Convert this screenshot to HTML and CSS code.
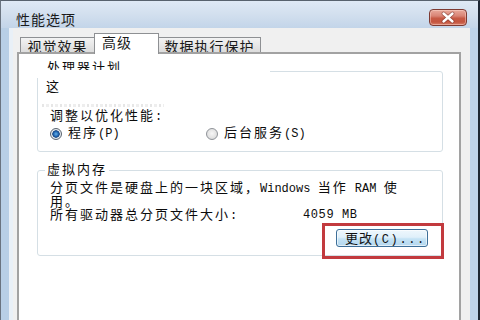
FILE: index.html
```html
<!DOCTYPE html>
<html lang="zh-CN">
<head>
<meta charset="utf-8">
<title>性能选项</title>
<link rel="stylesheet" href="styles.css">
</head>
<body>
<div class="window">
  <div class="titlebar">
    <span class="title">性能选项</span>
    <span class="close">
      <svg width="38" height="17" viewBox="0 0 38 17">
        <path d="M14.5 4.5 L23.5 12.5 M23.5 4.5 L14.5 12.5" stroke="#6b2a22" stroke-width="4" stroke-linecap="round" fill="none" opacity="0.55"/>
        <path d="M14.5 4.5 L23.5 12.5 M23.5 4.5 L14.5 12.5" stroke="#ffffff" stroke-width="2.4" stroke-linecap="round" fill="none"/>
      </svg>
    </span>
  </div>
  <div class="frame">
    <div class="client">
      <div class="tabs">
        <div class="tab tab-1">视觉效果</div>
        <div class="tab tab-active">高级</div>
        <div class="tab tab-3">数据执行保护</div>
      </div>
      <div class="panel">
        <fieldset class="group group-cpu">
          <legend class="legend legend-cut">处理器计划<span class="smear"></span></legend>
          <div class="body">
            <p class="line line-cut">这</p>
            <div class="ghost"></div>
            <p class="line line-sub">调整以优化性能<span class="lat">:</span></p>
            <div class="radios">
              <label class="radio radio-1"><span class="dot checked"></span>程序<span class="lat">(P)</span></label>
              <label class="radio"><span class="dot"></span>后台服务<span class="lat">(S)</span></label>
            </div>
          </div>
        </fieldset>
        <fieldset class="group group-vm">
          <legend class="legend">虚拟内存</legend>
          <div class="body">
            <p class="line line-two">分页文件是硬盘上的一块区域，<span class="lat">Windows </span>当作<span class="lat"> RAM </span>使<br>用。</p>
            <div class="size-row">
              <span class="size-label">所有驱动器总分页文件大小<span class="lat">:</span></span>
              <span class="lat size-value">4059 MB</span>
            </div>
            <div class="btn-row">
              <span class="btn-wrap">
                <button class="btn" type="button">更改<span class="lat btn-lat">(C)...</span></button>
                <span class="mark"></span>
              </span>
            </div>
          </div>
        </fieldset>
      </div>
    </div>
  </div>
</div>
</body>
</html>
```

FILE: styles.css
```css
* { box-sizing: border-box; }

html, body {
  margin: 0;
  padding: 0;
  width: 480px;
  height: 320px;
  overflow: hidden;
  background: #ffffff;
}

body {
  font-family: "Liberation Mono", "Noto Sans CJK SC", monospace;
  color: #0c0c0c;
}

.window {
  width: 480px;
  height: 320px;
  display: flex;
  flex-direction: column;
  border-top: 1px solid #58626e;
  border-left: 1px solid #6a7480;
  border-right: 2px solid #1c2633;
  background: #bcd2e8;
  overflow: hidden;
}

.titlebar {
  height: 27px;
  flex: none;
  display: flex;
  align-items: flex-start;
  justify-content: space-between;
  padding: 8px 11px 0 15px;
  background: linear-gradient(to bottom, #dfe9f5 0%, #d2dfee 50%, #c3d5e9 100%);
}

.title {
  font-family: "Noto Sans CJK SC", sans-serif;
  font-size: 14px;
  line-height: 14px;
  letter-spacing: 1px;
  margin-top: 3px;
  color: #1a1a1a;
}

.close {
  width: 38px;
  height: 17px;
  display: block;
  border: 1px solid #7d3a32;
  border-radius: 4px;
  background: linear-gradient(to bottom, #e9a99b 0%, #d98475 40%, #c75a45 55%, #c4553f 80%, #d9806a 100%);
  box-shadow: inset 0 0 0 1px rgba(255, 220, 210, 0.45);
  overflow: hidden;
}

.close svg {
  display: block;
  margin: -1px 0 0 -1px;
}

.frame {
  flex: 1;
  display: flex;
  padding: 0 8px;
  background: linear-gradient(to right, #b8cfe6, #bdd3ea);
  min-height: 0;
}

.client {
  flex: 1;
  display: flex;
  flex-direction: column;
  background: #f0f0f0;
  padding: 0 9px 0 8px;
  box-shadow: inset 4px 0 0 #e9f0f7;
  min-height: 0;
}

.tabs {
  height: 24px;
  flex: none;
  display: flex;
  align-items: flex-end;
  padding-left: 3px;
}

.tab {
  font-family: "Noto Sans CJK SC", sans-serif;
  font-size: 14px;
  line-height: 14px;
  letter-spacing: 1px;
  height: 15px;
  border: 1px solid #8e9093;
  border-bottom: none;
  background: linear-gradient(to bottom, #f3f3f3, #dcdcdc);
  text-align: center;
  padding-top: 1px;
  color: #1a1a1a;
}

.tab-1 { width: 75px; }
.tab-3 { width: 103px; }

.tab-active {
  width: 65px;
  height: 21px;
  margin: 0 -1px -2px -1px;
  background: #ffffff;
  position: relative;
  z-index: 1;
  padding-top: 1px;
  padding-left: 7px;
  text-align: left;
}

.panel {
  flex: 1;
  background: #ffffff;
  border: 2px solid #a2a2a2;
  border-bottom: none;
  display: flex;
  flex-direction: column;
  min-height: 0;
}

.group {
  margin: 0 16px 0 18px;
  padding: 6px 14px 9px 7px;
  border: 1px solid #d5dfe5;
  border-radius: 3px;
  min-width: 0;
}

.group-cpu { margin-top: 8px; padding-top: 1px; padding-bottom: 10px; }
.group-vm { margin-top: 12px; padding-top: 5px; padding-bottom: 8px; }

.legend {
  font-size: 13px;
  line-height: 13px;
  letter-spacing: 2px;
  padding: 0 2px;
  position: relative;
}

.legend-cut {
  width: 225px;
  padding-bottom: 5px;
}

.smear {
  position: absolute;
  left: -10px;
  top: 8px;
  width: 232px;
  height: 8px;
  background: #ffffff;
}

.body {
  padding-left: 5px;
}

.line {
  margin: 0;
  font-size: 13px;
  line-height: 13px;
  height: 13px;
  letter-spacing: 2px;
  white-space: nowrap;
}

.line-two { height: 26px; }

.line-cut { margin-left: -4px; }

.ghost {
  margin: 10px 0 0 -8px;
  width: 122px;
  height: 3px;
  background: repeating-linear-gradient(to right, #e6e6e6 0 2px, #ffffff 2px 4px, #eeeeee 4px 7px, #ffffff 7px 9px);
}

.line-sub { margin-top: 3px; }

.lat {
  font-family: "Liberation Mono", monospace;
  font-size: 12px;
  letter-spacing: 0;
}

.radios {
  margin-top: 4px;
  height: 14px;
  display: flex;
  align-items: center;
}

.radio {
  display: flex;
  align-items: center;
  font-size: 13px;
  line-height: 14px;
  letter-spacing: 2px;
  white-space: nowrap;
}

.radio-1 { width: 156px; }

.dot {
  width: 12px;
  height: 12px;
  border-radius: 50%;
  border: 1px solid #8f9398;
  background: radial-gradient(circle at 50% 45%, #f7f7f7 0, #e2e2e2 60%, #cdd0d3 100%);
  margin-right: 6px;
  flex: none;
}

.dot.checked {
  border-color: #5a6470;
  background: radial-gradient(circle at 50% 50%, #63b1ea 0, #1c5fab 2.6px, #123f78 3.4px, #e8eef3 4px, #d0d8de 100%);
}

.size-row {
  margin-top: 1px;
  display: flex;
  font-size: 13px;
  line-height: 13px;
  height: 13px;
  letter-spacing: 2px;
  white-space: nowrap;
}

.size-label { width: 253px; }
.size-value { letter-spacing: 0.6px; }

.btn-row {
  margin-top: 7px;
  display: flex;
  justify-content: flex-end;
}

.btn-wrap {
  position: relative;
  display: block;
}

.btn {
  display: block;
  width: 92px;
  height: 18px;
  margin: 0;
  padding: 0 0 0 8px;
  text-align: left;
  font-family: "Noto Sans CJK SC", sans-serif;
  font-size: 13px;
  line-height: 16px;
  letter-spacing: 1px;
  color: #111111;
  border: 1px solid #3d6f99;
  border-radius: 3px;
  background: linear-gradient(to bottom, #eef7fc 0%, #e0f0fa 45%, #c5e3f5 55%, #b3d7ee 100%);
  box-shadow: inset 0 0 0 1px rgba(255, 255, 255, 0.6);
}

.btn-lat { letter-spacing: 1.6px; }

.mark {
  position: absolute;
  left: -14px;
  right: -16px;
  top: -6px;
  bottom: -12px;
  border: 3px solid #c23a3e;
  pointer-events: none;
}
```
